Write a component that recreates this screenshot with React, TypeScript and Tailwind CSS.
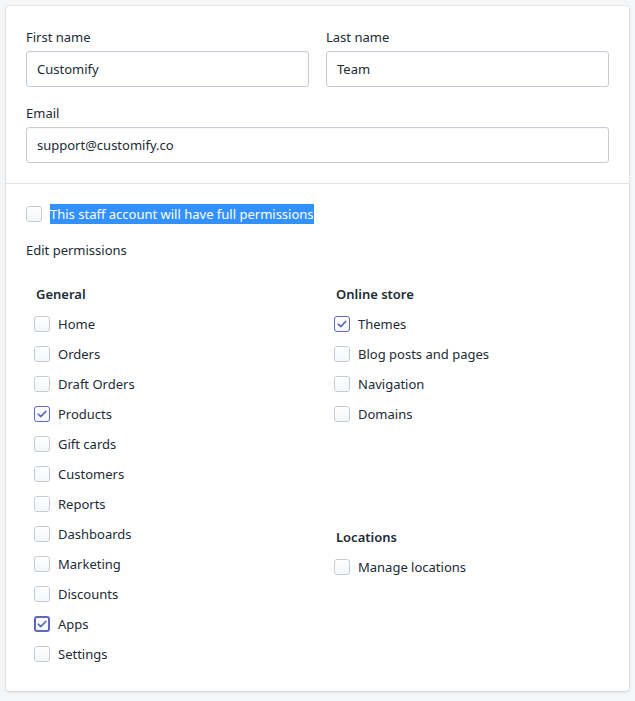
import React from "react";

const Check = ({ checked = false, focused = false }: { checked?: boolean; focused?: boolean }) => (
  <span
    className={
      "relative flex h-4 w-4 shrink-0 items-center justify-center rounded-[3px] bg-gradient-to-b from-white to-[#f4f6f8] " +
      (checked
        ? focused
          ? "border-2 border-[#5c6ac4]"
          : "border border-[#5c6ac4]"
        : "border border-[#c4cdd5]")
    }
  >
    {checked && (
      <svg width="10" height="8" viewBox="0 0 10 8" fill="none">
        <path d="M1.2 4.2 L3.8 6.6 L8.8 1.4" stroke="#5c6ac4" strokeWidth="1.6" strokeLinecap="round" strokeLinejoin="round" />
      </svg>
    )}
  </span>
);

const Item = ({ label, checked, focused }: { label: string; checked?: boolean; focused?: boolean }) => (
  <div className="flex h-5 items-center gap-2">
    <Check checked={checked} focused={focused} />
    <span>{label}</span>
  </div>
);

const Field = ({ label, value }: { label: string; value: string }) => (
  <div className="flex flex-col">
    <label className="mb-1 leading-5">{label}</label>
    <div className="flex h-9 items-center rounded-[3px] border border-[#c4cdd5] bg-white px-[10px] shadow-[inset_0_1px_0_0_rgba(99,115,129,0.05)]">
      {value}
    </div>
  </div>
);

export default function App() {
  const general: [string, boolean?, boolean?][] = [
    ["Home"],
    ["Orders"],
    ["Draft Orders"],
    ["Products", true],
    ["Gift cards"],
    ["Customers"],
    ["Reports"],
    ["Dashboards"],
    ["Marketing"],
    ["Discounts"],
    ["Apps", true, true],
    ["Settings"],
  ];
  const online: [string, boolean?][] = [
    ["Themes", true],
    ["Blog posts and pages"],
    ["Navigation"],
    ["Domains"],
  ];
  return (
    <div
      className="min-h-[701px] bg-[#f4f6f8] p-[6px] text-[13px] leading-5 text-[#212b36]"
      style={{ fontFamily: '"Noto Sans", "Open Sans", sans-serif' }}
    >
      <div className="rounded-[3px] bg-white shadow-[0_0_0_1px_rgba(63,63,68,0.05),0_1px_3px_0_rgba(63,63,68,0.15)]">
        <div className="flex flex-col gap-4 px-5 pb-5 pt-[21px]">
          <div className="grid grid-cols-2 gap-x-[17px]">
            <Field label="First name" value="Customify" />
            <Field label="Last name" value="Team" />
          </div>
          <Field label="Email" value="support@customify.co" />
        </div>
        <div className="border-t border-[#dfe3e8] px-5 pb-[27px] pt-5">
          <div className="flex h-5 items-center gap-2">
            <Check />
            <span className="bg-[#3390ff] text-white">This staff account will have full permissions</span>
          </div>
          <div className="mt-4">Edit permissions</div>
          <div className="mt-6 grid grid-cols-2 gap-x-[17px]">
            <div className="pl-2">
              <div className="pl-0.5 font-semibold">General</div>
              <div className="mt-[10px] flex flex-col gap-[10px]">
                {general.map(([l, c, f]) => (
                  <Item key={l} label={l} checked={c} focused={f} />
                ))}
              </div>
            </div>
            <div className="pl-2">
              <div className="pl-0.5 font-semibold">Online store</div>
              <div className="mt-[10px] flex flex-col gap-[10px]">
                {online.map(([l, c]) => (
                  <Item key={l} label={l} checked={c} />
                ))}
              </div>
              <div className="mt-[103px] pl-0.5 font-semibold">Locations</div>
              <div className="mt-[10px] flex flex-col gap-[10px]">
                <Item label="Manage locations" />
              </div>
            </div>
          </div>
        </div>
      </div>
    </div>
  );
}
